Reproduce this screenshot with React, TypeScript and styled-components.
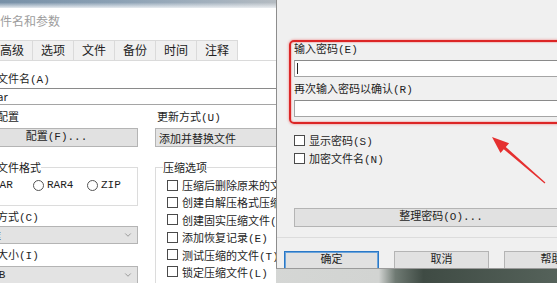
import styled, { createGlobalStyle } from "styled-components";
import { ChevronDown } from "lucide-react";

const GlobalStyle = createGlobalStyle`
  html, body {
    margin: 0;
    padding: 0;
    background: #fff;
  }
  body {
    font-family: "Liberation Mono", "Noto Sans CJK SC", monospace;
    font-size: 11px;
    color: #1e1e1e;
  }
`;

const CJK = `"Noto Sans CJK SC", "Noto Sans", sans-serif`;

const Stage = styled.div`
  position: relative;
  width: 557px;
  height: 283px;
  overflow: hidden;
  display: flex;
  align-items: flex-start;
  background: linear-gradient(
    90deg,
    #dcdddc 0%,
    #d2d4d2 68%,
    #6f7a73 71%,
    #3f4b44 76%,
    #55625a 100%
  );
`;

/* ---------- left window: 压缩文件名和参数 ---------- */

const LeftWindow = styled.div`
  width: 276px;
  height: 283px;
  flex: none;
  overflow: hidden;
  background: #fff;
  display: flex;
  flex-direction: column;
`;

const DesktopStrip = styled.div`
  height: 8px;
  flex: none;
  background:
    linear-gradient(to bottom, rgba(255, 255, 255, 0) 30%, rgba(240, 243, 246, 0.9) 100%),
    linear-gradient(90deg, #7790a7 0%, #8da2b5 45%, #a5b2be 80%, #b4bbc1 100%);
`;

const LeftInner = styled.div`
  margin-left: -50px;
  width: 380px;
  display: flex;
  flex-direction: column;
  flex: 1;
`;

const TitleBar = styled.div`
  height: 28px;
  line-height: 26px;
  padding-left: 14px;
  font-family: ${CJK};
  font-size: 12px;
  color: #9d9d9d;
`;

const TabRow = styled.div`
  display: flex;
  height: 20px;
  margin-top: 4px;
`;

const Tab = styled.div<{ $active?: boolean }>`
  width: 42px;
  box-sizing: border-box;
  margin-right: -1px;
  border: 1px solid #dadada;
  border-bottom: none;
  background: ${(p) => (p.$active ? "#fff" : "#f0f0f0")};
  font-family: ${CJK};
  font-size: 12px;
  line-height: 18px;
  text-align: center;
  color: #222;
`;

const Page = styled.div`
  flex: 1;
  border-top: 1px solid #dadada;
  padding-left: 25px;
  display: flex;
  flex-direction: column;
`;

const Label = styled.div<{ $mt?: number; $pl?: number }>`
  margin-top: ${(p) => p.$mt ?? 0}px;
  padding-left: ${(p) => p.$pl ?? 0}px;
  height: 16px;
  line-height: 16px;
  white-space: nowrap;
`;

const TextInput = styled.div<{ $mt?: number; $w: number }>`
  margin-top: ${(p) => p.$mt ?? 0}px;
  width: ${(p) => p.$w}px;
  height: 17px;
  box-sizing: border-box;
  border: 1px solid #a5a5a5;
  border-top-color: #8a8a8a;
  background: #fff;
  padding-left: 2px;
  line-height: 15px;
  font-family: ${CJK};
  white-space: nowrap;
`;

const Caret = styled.span`
  display: inline-block;
  width: 1px;
  height: 11px;
  margin-top: 2px;
  background: #222;
  vertical-align: top;
`;

const Columns = styled.div`
  display: grid;
  grid-template-columns: 163px 164px;
  column-gap: 17px;
`;

const Column = styled.div`
  display: flex;
  flex-direction: column;
`;

const PushButton = styled.div<{ $mt?: number; $w?: number; $default?: boolean }>`
  margin-top: ${(p) => p.$mt ?? 0}px;
  width: ${(p) => (p.$w ? `${p.$w}px` : "100%")};
  height: 19px;
  flex: none;
  box-sizing: border-box;
  border: 1px solid ${(p) => (p.$default ? "#2a78c7" : "#b4b4b4")};
  box-shadow: ${(p) => (p.$default ? "inset 0 0 0 1px #6aa3da" : "none")};
  background: #e1e1e1;
  line-height: 17px;
  text-align: center;
  white-space: nowrap;
`;

const ComboBox = styled.div<{ $mt?: number; $h?: number }>`
  margin-top: ${(p) => p.$mt ?? 0}px;
  height: ${(p) => p.$h ?? 18}px;
  box-sizing: border-box;
  border: 1px solid #b4b4b4;
  background: #e3e3e3;
  display: flex;
  align-items: center;
  justify-content: space-between;
  padding: 0 4px 0 3px;
  white-space: nowrap;
  color: #222;
`;

const GroupBox = styled.fieldset<{ $shift?: number; $h: number }>`
  margin: 13px 0 0 ${(p) => -(p.$shift ?? 0)}px;
  padding: 0 6px 0 7px;
  height: ${(p) => p.$h}px;
  box-sizing: border-box;
  border: 1px solid #dcdcdc;
  min-width: 0;

  legend {
    padding: 0;
    height: 14px;
    line-height: 14px;
    font-family: ${CJK};
    color: #222;
  }
`;

const RadioRow = styled.div`
  display: flex;
  gap: 10px;
  margin-top: 3px;
  padding-left: 4px;
  height: 16px;
  align-items: center;
`;

const RadioItem = styled.label`
  display: flex;
  align-items: center;
  gap: 3px;
  width: 45px;
`;

const RadioDot = styled.span`
  width: 11px;
  height: 11px;
  box-sizing: border-box;
  border-radius: 50%;
  border: 1px solid #555;
  background: #fff;
`;

const CheckRow = styled.label<{ $mt?: number }>`
  display: flex;
  align-items: center;
  gap: 4px;
  height: 16px;
  margin-top: ${(p) => p.$mt ?? 0}px;
  padding-left: 4px;
  white-space: nowrap;
`;

const CheckBox = styled.span`
  width: 11px;
  height: 11px;
  flex: none;
  box-sizing: border-box;
  border: 1px solid #4a4a4a;
  background: #fff;
`;

/* ---------- right window: 输入密码 ---------- */

const PassWindow = styled.div`
  width: 281px;
  height: 269px;
  flex: none;
  overflow: hidden;
  box-sizing: border-box;
  border-left: 1px solid #8d8d8d;
  border-bottom: 1px solid #9a9a9a;
  background: #f0f0f0;
`;

const PassInner = styled.div`
  width: 330px;
  padding-left: 17px;
  display: flex;
  flex-direction: column;
`;

const PassChecks = styled.div`
  display: flex;
  flex-direction: column;
  margin-top: 15px;
  gap: 2px;

  ${CheckRow} {
    padding-left: 0;
  }
`;

const Separator = styled.div`
  margin: 10px 0 0 -17px;
  height: 1px;
  background: #dcdcdc;
`;

const ButtonRow = styled.div`
  display: flex;
  gap: 15px;
  margin: 13px 0 0 -10px;
`;

/* ---------- annotation overlay ---------- */

const Highlight = styled.div`
  position: absolute;
  left: 289px;
  top: 40px;
  width: 310px;
  height: 84px;
  box-sizing: border-box;
  border: 2px solid #dc2626;
  border-radius: 5px;
  box-shadow: 0 0 2px 1px rgba(240, 120, 120, 0.45), inset 0 0 1px 1px rgba(240, 120, 120, 0.35);
  pointer-events: none;
`;

const Overlay = styled.svg`
  position: absolute;
  left: 0;
  top: 0;
  pointer-events: none;
`;

const checks = [
  "压缩后删除原来的文件(D)",
  "创建自解压格式压缩文件(X)",
  "创建固实压缩文件(S)",
  "添加恢复记录(E)",
  "测试压缩的文件(T)",
  "锁定压缩文件(L)",
];

const tabs = ["常规", "高级", "选项", "文件", "备份", "时间", "注释"];

export default function App() {
  return (
    <>
      <GlobalStyle />
      <Stage>
        <LeftWindow>
          <DesktopStrip />
          <LeftInner>
            <TitleBar>压缩文件名和参数</TitleBar>
            <TabRow>
              {tabs.map((t, i) => (
                <Tab key={t} $active={i === 0}>
                  {t}
                </Tab>
              ))}
            </TabRow>
            <Page>
              <Label $mt={11}>压缩文件名(A)</Label>
              <TextInput $w={330}>12.rar</TextInput>
              <Columns>
                <Column>
                  <Label $mt={5}>默认配置</Label>
                  <PushButton $mt={2}>配置(F)...</PushButton>
                  <GroupBox $shift={8} $h={46} style={{ width: 171 }}>
                    <legend>压缩文件格式</legend>
                    <RadioRow>
                      <RadioItem>
                        <RadioDot />
                        RAR
                      </RadioItem>
                      <RadioItem>
                        <RadioDot />
                        RAR4
                      </RadioItem>
                      <RadioItem>
                        <RadioDot />
                        ZIP
                      </RadioItem>
                    </RadioRow>
                  </GroupBox>
                  <Label $mt={4}>压缩方式(C)</Label>
                  <ComboBox>
                    <span>标准</span>
                    <ChevronDown size={10} color="#777" strokeWidth={1.6} />
                  </ComboBox>
                  <Label $mt={4}>字典大小(I)</Label>
                  <ComboBox $mt={2}>
                    <span>4 MB</span>
                    <ChevronDown size={10} color="#777" strokeWidth={1.6} />
                  </ComboBox>
                </Column>
                <Column>
                  <Label $mt={5} $pl={2}>
                    更新方式(U)
                  </Label>
                  <ComboBox $mt={2} $h={19}>
                    <span>添加并替换文件</span>
                    <ChevronDown size={10} color="#777" strokeWidth={1.6} />
                  </ComboBox>
                  <GroupBox $h={140}>
                    <legend>压缩选项</legend>
                    {checks.map((c, i) => (
                      <CheckRow key={c} $mt={i === 0 ? 3 : 1.4}>
                        <CheckBox />
                        {c}
                      </CheckRow>
                    ))}
                  </GroupBox>
                </Column>
              </Columns>
            </Page>
          </LeftInner>
        </LeftWindow>

        <PassWindow>
          <PassInner>
            <Label $mt={42}>输入密码(E)</Label>
            <TextInput $mt={2} $w={300}>
              <Caret />
            </TextInput>
            <Label $mt={5}>再次输入密码以确认(R)</Label>
            <TextInput $mt={2} $w={300} />
            <PassChecks>
              <CheckRow>
                <CheckBox />
                显示密码(S)
              </CheckRow>
              <CheckRow>
                <CheckBox />
                加密文件名(N)
              </CheckRow>
            </PassChecks>
            <PushButton $mt={42} $w={294}>
              整理密码(O)...
            </PushButton>
            <Separator />
            <ButtonRow>
              <PushButton $w={95} $default>
                确定
              </PushButton>
              <PushButton $w={95}>取消</PushButton>
              <PushButton $w={95}>帮助</PushButton>
            </ButtonRow>
          </PassInner>
        </PassWindow>

        <Highlight />
        <Overlay width="557" height="283" viewBox="0 0 557 283">
          <polygon
            points="492,137 509.1,143.2 505.8,146.9 545.4,182.5 544.6,183.5 503.8,149.3 500.5,153"
            fill="#e53030"
          />
        </Overlay>
      </Stage>
    </>
  );
}
